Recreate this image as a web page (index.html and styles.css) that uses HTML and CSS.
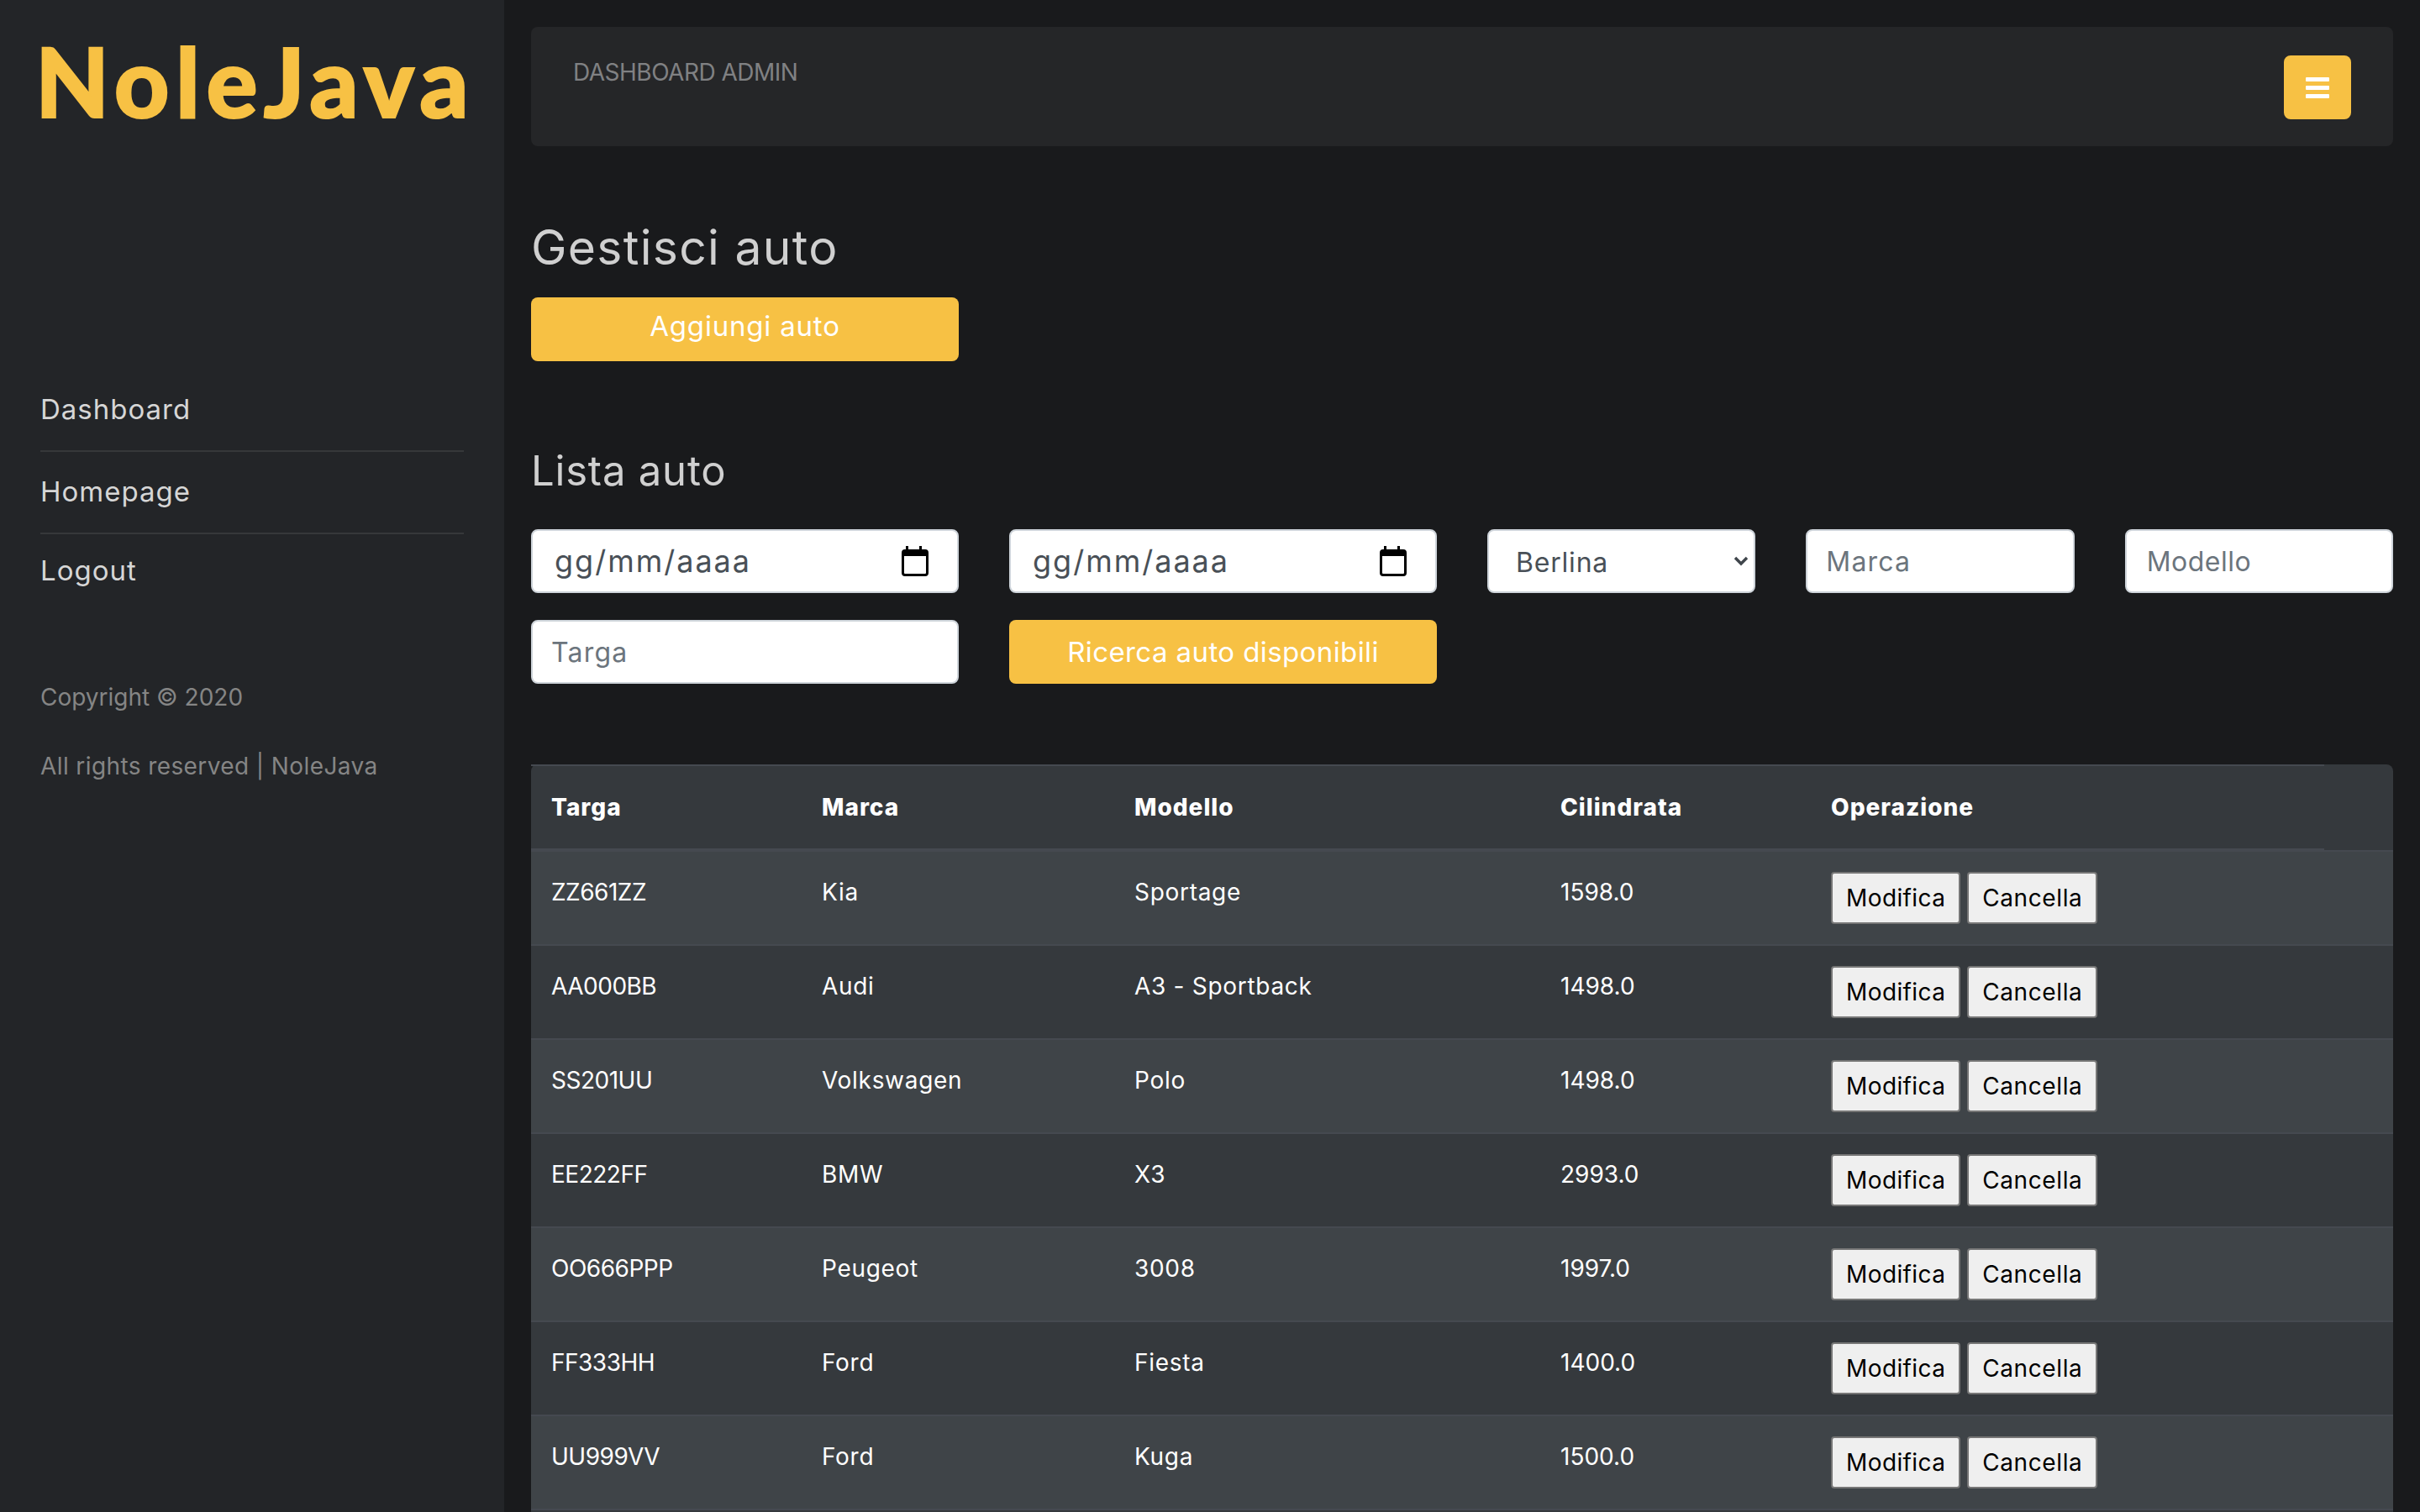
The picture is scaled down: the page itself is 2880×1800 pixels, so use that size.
FILE: index.html
```html
<!DOCTYPE html>
<html lang="it">
<head>
<meta charset="utf-8">
<title>NoleJava</title>
<link rel="stylesheet" href="styles.css">
</head>
<body>
<aside class="sidebar">
  <div class="logo">NoleJava</div>
  <nav class="nav">
    <a class="nav-link">Dashboard</a>
    <a class="nav-link">Homepage</a>
    <a class="nav-link">Logout</a>
  </nav>
  <div class="copy">
    <p>Copyright © 2020</p>
    <p>All rights reserved | NoleJava</p>
  </div>
</aside>
<main class="main">
  <header class="topbar">
    <span class="topbar-title">DASHBOARD ADMIN</span>
    <button class="menu-btn" aria-label="menu"><i></i><i></i><i></i></button>
  </header>
  <h2 class="title-lg">Gestisci auto</h2>
  <div class="grid grid-add">
    <button class="btn span3">Aggiungi auto</button>
  </div>
  <h3 class="title-md">Lista auto</h3>
  <div class="grid filters">
    <div class="field date span3"><span>gg/mm/aaaa</span>
      <svg class="cal" viewBox="0 0 32 36"><path d="M5 0h3v4h13V0h3v4h4a4 4 0 0 1 4 4v24a4 4 0 0 1-4 4H4a4 4 0 0 1-4-4V8a4 4 0 0 1 4-4h1zM3 12v20a1 1 0 0 0 1 1h24a1 1 0 0 0 1-1V12z" fill="#000" fill-rule="evenodd"/></svg>
    </div>
    <div class="field date span3"><span>gg/mm/aaaa</span>
      <svg class="cal" viewBox="0 0 32 36"><path d="M5 0h3v4h13V0h3v4h4a4 4 0 0 1 4 4v24a4 4 0 0 1-4 4H4a4 4 0 0 1-4-4V8a4 4 0 0 1 4-4h1zM3 12v20a1 1 0 0 0 1 1h24a1 1 0 0 0 1-1V12z" fill="#000" fill-rule="evenodd"/></svg>
    </div>
    <div class="select-wrap span2">
      <select class="field select"><option>Berlina</option></select>
      <svg class="chev" viewBox="0 0 18 12"><path d="M2 2l7 7 7-7" fill="none" stroke="#3f454b" stroke-width="3.4"/></svg>
    </div>
    <input class="field text span2" placeholder="Marca">
    <input class="field text span2 modello" placeholder="Modello">
    <input class="field text span3 targa" placeholder="Targa">
    <button class="btn span3 search">Ricerca auto disponibili</button>
  </div>
  <div class="table-wrap">
    <table class="cars">
      <thead>
        <tr><th>Targa</th><th>Marca</th><th>Modello</th><th>Cilindrata</th><th>Operazione</th><th class="filler"></th></tr>
      </thead>
      <tbody>
        <tr><td>ZZ661ZZ</td><td>Kia</td><td>Sportage</td><td>1598.0</td><td class="ops"><button class="act">Modifica</button> <button class="act del">Cancella</button></td><td></td></tr>
        <tr><td>AA000BB</td><td>Audi</td><td>A3 - Sportback</td><td>1498.0</td><td class="ops"><button class="act">Modifica</button> <button class="act del">Cancella</button></td><td></td></tr>
        <tr><td>SS201UU</td><td>Volkswagen</td><td>Polo</td><td>1498.0</td><td class="ops"><button class="act">Modifica</button> <button class="act del">Cancella</button></td><td></td></tr>
        <tr><td>EE222FF</td><td>BMW</td><td>X3</td><td>2993.0</td><td class="ops"><button class="act">Modifica</button> <button class="act del">Cancella</button></td><td></td></tr>
        <tr><td>OO666PPP</td><td>Peugeot</td><td>3008</td><td>1997.0</td><td class="ops"><button class="act">Modifica</button> <button class="act del">Cancella</button></td><td></td></tr>
        <tr><td>FF333HH</td><td>Ford</td><td>Fiesta</td><td>1400.0</td><td class="ops"><button class="act">Modifica</button> <button class="act del">Cancella</button></td><td></td></tr>
        <tr><td>UU999VV</td><td>Ford</td><td>Kuga</td><td>1500.0</td><td class="ops"><button class="act">Modifica</button> <button class="act del">Cancella</button></td><td></td></tr>
      </tbody>
    </table>
  </div>
</main>
</body>
</html>
```
FILE: styles.css
```css
* { box-sizing: border-box; }
html, body { margin: 0; height: 100%; }
body {
  display: flex;
  height: 1800px;
  overflow: hidden;
  background: #191a1c;
  font-family: Inter, "Liberation Sans", sans-serif;
  color: #fff;
}
.sidebar {
  flex: 0 0 600px;
  min-width: 0;
  padding: 0 48px;
  background: #232528;
}
.logo {
  height: 296px;
  padding-top: 21px;
  margin-left: -6px;
  font-family: Lato, sans-serif;
  font-weight: 900;
  font-size: 114px;
  line-height: 150px;
  letter-spacing: 7.4px;
  -webkit-text-stroke: 2px #f7c144;
  color: #f7c144;
  white-space: nowrap;
}
.nav { margin-top: 144px; display: flex; flex-direction: column; }
.nav-link {
  height: 98px;
  padding-top: 23px;
  font-size: 33px;
  line-height: 48px;
  letter-spacing: 1px;
  color: #d6d6d6;
  border-bottom: 2px solid #36383a;
}
.nav-link:last-child { height: 94px; padding-top: 19px; border-bottom: 0; }
.copy { margin-top: 79px; color: #858585; font-size: 28px; line-height: 42px; }
.copy p { margin: 0 0 40px; }
.copy p:last-child { letter-spacing: .4px; }

.main { flex: 1; min-width: 0; padding: 32px 32px 0; }
.topbar {
  display: flex;
  justify-content: space-between;
  height: 142px;
  padding: 34px 50px 0;
  background: #252628;
  border-radius: 8px;
}
.topbar-title { font-size: 28px; line-height: 40px; letter-spacing: -.5px; color: #808183; }
.menu-btn {
  display: flex;
  flex-direction: column;
  align-items: center;
  justify-content: center;
  gap: 5px;
  width: 80px;
  height: 76px;
  padding: 0;
  background: #f7c144;
  border: 0;
  border-radius: 8px;
}
.menu-btn i { display: block; width: 28px; height: 5px; border-radius: 1px; background: #fff; }

.title-lg { margin: 85px 0 0; height: 72px; font-weight: 400; font-size: 57px; line-height: 72px; letter-spacing: 1.3px; color: #d0d0d0; }
.title-md { margin: 95px 0 0; height: 72px; font-weight: 400; font-size: 49px; line-height: 72px; letter-spacing: .8px; color: #d0d0d0; }

.grid { display: grid; grid-template-columns: repeat(12, 1fr); column-gap: 60px; row-gap: 32px; }
.grid-add { margin-top: 23px; }
.filters { margin-top: 33px; }
.span3 { grid-column: span 3; }
.span2 { grid-column: span 2; }
.targa { grid-column: 1 / span 3; }

.btn {
  height: 76px;
  padding: 0 0 8px;
  font: 400 33px/48px Inter, sans-serif;
  letter-spacing: .8px;
  color: #fff;
  background: #f7c144;
  border: 0;
  border-radius: 8px;
}
.search { padding: 0; letter-spacing: .4px; }
.field {
  height: 76px;
  background: #fff;
  border: 2px solid #ced4da;
  border-radius: 8px;
  font: 400 32px/48px Inter, sans-serif;
  color: #495057;
}
.field::placeholder { color: #6c757d; opacity: 1; }
.text { width: 100%; padding: 0 22px; letter-spacing: 1.2px; outline: 0; }
.modello { padding-left: 24px; letter-spacing: .5px; }
.date { display: flex; align-items: center; justify-content: space-between; padding: 0 34px 0 26px; font-size: 36px; letter-spacing: 2px; }
.cal { display: block; width: 32px; height: 36px; }
.select-wrap { position: relative; }
.select {
  display: block;
  width: 100%;
  padding: 4px 0 0 32px;
  letter-spacing: .8px;
  appearance: none;
  -webkit-appearance: none;
  outline: 0;
}
.chev { position: absolute; top: 32px; left: 293px; width: 18px; height: 12px; }

.table-wrap {
  margin-top: 96px;
  padding-bottom: 40px;
  background: #35393d;
  border-radius: 8px 8px 0 0;
}
.cars {
  width: 100%;
  border-collapse: separate;
  border-spacing: 0;
  table-layout: fixed;
  font-size: 28px;
  line-height: 42px;
  border-bottom: 2px solid #454950;
}
.cars th, .cars td { padding: 0 24px; text-align: left; vertical-align: top; }
.cars th {
  height: 102px;
  padding-top: 28px;
  font-weight: 800;
  letter-spacing: 1px;
  border-top: 2px solid #454950;
  border-bottom: 2px solid #454950;
}
.cars th:nth-child(1) { width: 322px; }
.cars th:nth-child(2) { width: 372px; }
.cars th:nth-child(3) { width: 507px; }
.cars th:nth-child(4) { width: 322px; }
.cars th:nth-child(5) { width: 611px; }
.cars th.filler { border: 0; padding: 0; }
.cars td { height: 112px; padding-top: 27px; border-top: 2px solid #454950; }
.cars td:nth-child(1) { letter-spacing: -.5px; }
.cars td:nth-child(2), .cars td:nth-child(3) { letter-spacing: .7px; }
.cars td.ops { padding-top: 24px; }
.cars tbody tr:nth-child(odd) td { background: #3f4448; }
.act {
  height: 62px;
  padding: 0 16px;
  font: 400 28px/42px Inter, sans-serif;
  letter-spacing: .4px;
  color: #000;
  background: #efefef;
  border: 2px solid #767676;
  border-radius: 4px;
}
.del { letter-spacing: .6px; }
```
